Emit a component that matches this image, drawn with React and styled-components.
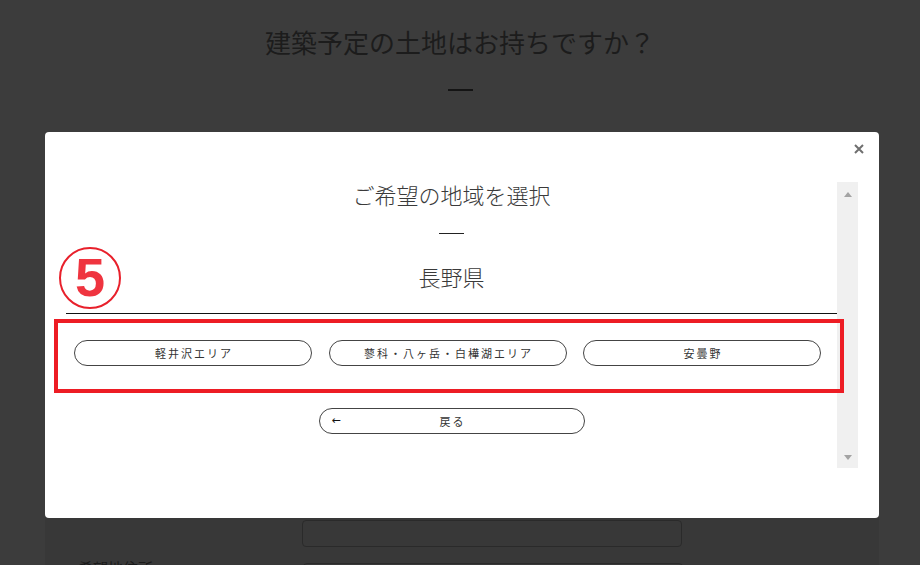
import styled, { createGlobalStyle } from "styled-components";

const GlobalStyle = createGlobalStyle`
  html, body {
    margin: 0;
    padding: 0;
    background: #3c3c3c;
    font-family: "Noto Sans CJK JP", "Noto Sans", sans-serif;
  }
  * { box-sizing: border-box; }
`;

const Page = styled.div`
  width: 920px;
  height: 565px;
  overflow: hidden;
  display: flex;
  flex-direction: column;
  align-items: center;
`;

const PageTitle = styled.h1`
  flex-shrink: 0;
  margin: 27px 0 0;
  font-size: 26px;
  line-height: 30px;
  font-weight: 400;
  color: #1c1c1c;
`;

const Dash = styled.span`
  flex-shrink: 0;
  display: block;
  width: 25px;
  height: ${(p) => p.$thick || 1}px;
  background: ${(p) => p.$color || "#222"};
  margin-top: ${(p) => p.$top || 0}px;
`;

const Panel = styled.div`
  flex-shrink: 0;
  align-self: stretch;
  margin: 44px 41px 0 45px;
  height: 600px;
  background: #383838;
  padding: 385px 0 0 33px;
`;

const InputBox = styled.div`
  width: ${(p) => p.$w}px;
  height: 27px;
  margin-left: ${(p) => p.$left}px;
  border: 1px solid #2a2a2a;
  border-radius: 4px;
`;

const FieldRow = styled.div`
  display: flex;
  align-items: flex-start;
  margin-top: 16px;
  gap: 150px;
`;

const FieldLabel = styled.span`
  font-size: 15px;
  color: #1a1a1a;
  line-height: 20px;
  margin-top: -5px;
`;

const Modal = styled.div`
  position: fixed;
  top: 132px;
  left: 45px;
  width: 834px;
  height: 386px;
  background: #fff;
  border-radius: 4px;
  padding: 50px 21px 50px 9px;
  display: flex;
`;

const CloseButton = styled.button`
  position: absolute;
  top: 11px;
  left: 808px;
  width: 12px;
  height: 12px;
  padding: 0;
  border: 0;
  background: none;
  display: flex;
`;

const Badge = styled.div`
  position: absolute;
  left: 14px;
  top: 115px;
  width: 62px;
  height: 62px;
  border: 2px solid #e8202b;
  border-radius: 50%;
  display: flex;
  align-items: center;
  justify-content: center;
  font-family: "Liberation Sans", Arial, sans-serif;
  font-weight: 700;
  font-size: 54px;
  line-height: 1;
  color: #ef343f;
  padding-bottom: 2px;
`;

const ScrollFrame = styled.div`
  flex: 1;
  display: flex;
`;

const Content = styled.div`
  flex: 1;
  padding-left: 12px;
  display: flex;
  flex-direction: column;
  align-items: center;
`;

const Heading = styled.h2`
  margin: 0;
  font-size: 22px;
  line-height: 24px;
  font-weight: 300;
  color: #3a3a3a;
`;

const Prefecture = styled.h3`
  margin: 30px 0 0;
  font-size: 22px;
  line-height: 24px;
  font-weight: 300;
  color: #3a3a3a;
`;

const Divider = styled.hr`
  align-self: stretch;
  margin: 25px 0 0;
  border: 0;
  border-top: 1px solid #111;
`;

const AreaRow = styled.div`
  position: relative;
  align-self: stretch;
  display: flex;
  gap: 16.5px;
  padding: 26px 16px 27px 8px;
`;

const Highlight = styled.div`
  position: absolute;
  top: 5px;
  bottom: 0;
  left: -12px;
  right: -7px;
  border: 4px solid #ed1c24;
  pointer-events: none;
`;

const PillButton = styled.button`
  position: relative;
  width: ${(p) => p.$w}px;
  height: 26px;
  margin-top: ${(p) => p.$top || 0}px;
  border: 1px solid #444;
  border-radius: 13px;
  background: #fff;
  font-family: "Noto Sans CJK JP", "Noto Sans", sans-serif;
  font-size: 11px;
  letter-spacing: 2px;
  padding: 0 0 0 2px;
  color: #333;
  display: flex;
  align-items: center;
  justify-content: center;
`;

const Arrow = styled.span`
  position: absolute;
  left: 12px;
  top: 50%;
  transform: translateY(-52%);
  font-family: "DejaVu Sans", sans-serif;
  font-size: 11px;
  letter-spacing: 0;
  color: #111;
`;

const Scrollbar = styled.div`
  width: 21px;
  background: #f0f0f0;
  display: flex;
  flex-direction: column;
  justify-content: space-between;
  align-items: center;
  padding: 10px 0 8px;
`;

const Tri = styled.span`
  width: 0;
  height: 0;
  border-left: 4.5px solid transparent;
  border-right: 4.5px solid transparent;
  ${(p) =>
    p.$down
      ? "border-top: 5px solid #a3a3a3;"
      : "border-bottom: 5px solid #a3a3a3;"}
`;

const areas = ["軽井沢エリア", "蓼科・八ヶ岳・白樺湖エリア", "安曇野"];

export default function App() {
  return (
    <>
      <GlobalStyle />
      <Page>
        <PageTitle>建築予定の土地はお持ちですか？</PageTitle>
        <Dash $thick={2} $color="#141414" $top={32} />
        <Panel>
          <InputBox $w={380} $left={224} />
          <FieldRow>
            <FieldLabel>希望地住所</FieldLabel>
            <InputBox $w={380} $left={0} />
          </FieldRow>
        </Panel>
      </Page>

      <Modal>
        <CloseButton aria-label="閉じる">
          <svg width="12" height="12" viewBox="0 0 12 12">
            <path d="M2 2 L10 10 M10 2 L2 10" stroke="#6f6f6f" strokeWidth="2" />
          </svg>
        </CloseButton>
        <Badge>5</Badge>
        <ScrollFrame>
          <Content>
            <Heading>ご希望の地域を選択</Heading>
            <Dash $top={27} $color="#222" />
            <Prefecture>長野県</Prefecture>
            <Divider />
            <AreaRow>
              <Highlight />
              {areas.map((a) => (
                <PillButton key={a} $w={238}>
                  {a}
                </PillButton>
              ))}
            </AreaRow>
            <PillButton $w={266} $top={15}>
              <Arrow>←</Arrow>
              戻る
            </PillButton>
          </Content>
          <Scrollbar>
            <Tri />
            <Tri $down />
          </Scrollbar>
        </ScrollFrame>
      </Modal>
    </>
  );
}
